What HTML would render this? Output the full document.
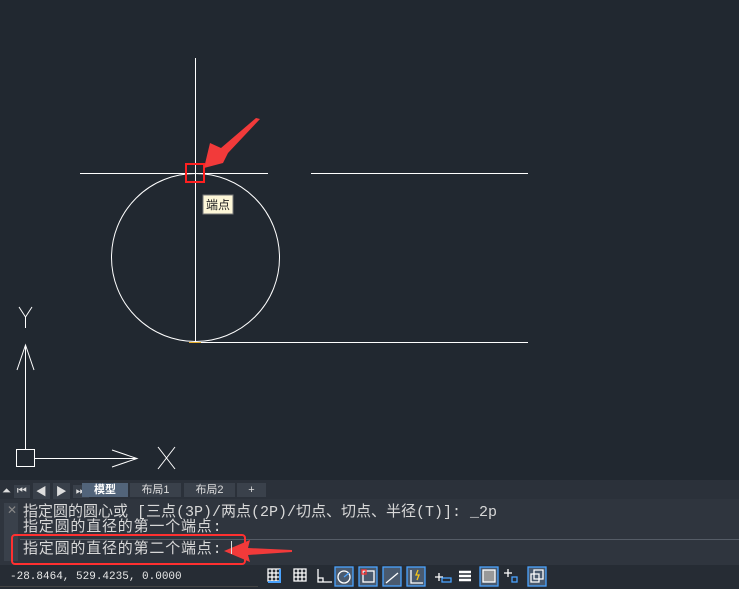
<!DOCTYPE html><html><head><meta charset="utf-8"><style>
body{margin:0;width:739px;height:589px;background:#212830;overflow:hidden;font-family:"Liberation Sans","Noto Sans CJK SC",sans-serif;position:relative}
.abs{position:absolute}
.cmd{font-family:"Liberation Mono","Noto Sans CJK SC",monospace;font-size:15px;color:#d8d8d8;line-height:15px;white-space:nowrap}
</style></head><body>
<svg class="abs" style="left:0;top:0" width="739" height="589">
<g stroke="#fff" stroke-width="1" fill="none">
<line x1="80" y1="173.5" x2="268" y2="173.5"/>
<line x1="311" y1="173.5" x2="528" y2="173.5"/>
<line x1="195.5" y1="58" x2="195.5" y2="342"/>
<line x1="195" y1="342.5" x2="528" y2="342.5"/>
<circle cx="195.5" cy="257.5" r="84"/>
<line x1="25.5" y1="345" x2="25.5" y2="449"/>
<polyline points="17,370 25.5,345 34,370"/>
<rect x="16.5" y="449.5" width="18" height="17"/>
<line x1="35" y1="458.5" x2="137" y2="458.5"/>
<polyline points="112,450 137,458.5 112,467"/>
<polyline points="19,307 25.5,317 32,307"/><line x1="25.5" y1="317" x2="25.5" y2="328"/>
<line x1="158" y1="447" x2="175" y2="469"/><line x1="175" y1="447" x2="158" y2="469"/>
</g>
<line x1="189" y1="342.5" x2="201" y2="342.5" stroke="#e8b030"/>
<rect x="186" y="164" width="18" height="18" fill="none" stroke="#ff2020" stroke-width="2"/>
<polygon points="260,119 228,153 223,163 204,168 210,143 221,148 256,118" fill="#f23a3a"/>
<rect x="203" y="195" width="30" height="19" fill="#fdf7d8" stroke="#777"/>
<text x="206" y="209" font-size="12" fill="#222" font-family="Noto Sans CJK SC">端点</text>
<rect x="0" y="480" width="739" height="19" fill="#2b313a"/>
<rect x="0" y="499" width="739" height="66" fill="#2f353e"/>
<rect x="0" y="565" width="739" height="24" fill="#262c34"/>
<rect x="4" y="503" width="14" height="58" fill="#3a414b"/>
<rect x="20" y="539" width="719" height="1" fill="#555c66"/>
<rect x="12" y="535" width="233" height="29" rx="3" fill="none" stroke="#ff3030" stroke-width="2"/>
<polygon points="224,551 250,540 248,548 292,550 292,552 248,555 250,562" fill="#f23a3a"/>
</svg>
<div class="abs" style="left:2px;top:483px;font-size:11px;color:#ddd;display:flex;gap:3px;align-items:center">
<span>⏶</span><span style="background:#39404a;padding:0 3px">⏮</span><span style="background:#39404a;padding:0 3px">◀</span><span style="background:#39404a;padding:0 3px">▶</span><span style="background:#39404a;padding:0 3px">⏭</span>
</div>
<div class="abs" style="left:82px;top:483px;width:46px;height:14px;background:#52647a;color:#fff;font-size:11px;text-align:center;font-weight:bold;line-height:14px">模型</div>
<div class="abs" style="left:130px;top:483px;width:51px;height:14px;background:#3a414b;color:#ddd;font-size:11px;text-align:center;line-height:14px">布局1</div>
<div class="abs" style="left:184px;top:483px;width:51px;height:14px;background:#3a414b;color:#ddd;font-size:11px;text-align:center;line-height:14px">布局2</div>
<div class="abs" style="left:237px;top:483px;width:29px;height:14px;background:#3a414b;color:#ddd;font-size:11px;text-align:center;line-height:14px">+</div>
<div class="abs" style="left:7px;top:503px;color:#888;font-size:12px">✕</div>
<div class="abs cmd" style="left:23px;top:505px">指定圆的圆心或 [三点(3P)/两点(2P)/切点、切点、半径(T)]: _2p</div>
<div class="abs cmd" style="left:23px;top:520px;letter-spacing:0.8px">指定圆的直径的第一个端点:</div>
<div class="abs cmd" style="left:23px;top:542px;letter-spacing:0.8px">指定圆的直径的第二个端点:</div>
<div class="abs" style="left:231px;top:541px;width:1px;height:13px;background:#ddd"></div>
<div class="abs" style="left:10px;top:571px;font-family:'Liberation Mono',monospace;font-size:11px;color:#e8e8e8">-28.8464, 529.4235, 0.0000</div>
<div class="abs" style="left:0;top:586px;width:258px;height:1px;background:#444"></div>
<svg class="abs" style="left:264px;top:565px" width="290" height="24" fill="none" stroke="#fff" stroke-width="1.3">
<path d="M4 4h12v12H4zM4 8h12M4 12h12M8 4v12M12 4v12"/><path d="M16 4v13H4" stroke="#4aa3ff" stroke-width="2"/>
<path d="M30 4h12v12H30zM30 8h12M30 12h12M34 4v12M38 4v12"/>
<path d="M54 4v13h14M54 13h5v4"/>
<rect x="71" y="2" width="18" height="19" fill="#4a5a6e" stroke="#4aa3ff"/><circle cx="80" cy="12" r="6"/><path d="M80 12l5-4" stroke="#4aa3ff"/>
<rect x="95" y="2" width="18" height="19" fill="#4a5a6e" stroke="#4aa3ff"/><rect x="99" y="6" width="11" height="11"/><rect x="98" y="5" width="4" height="4" stroke="#f33"/>
<rect x="119" y="2" width="18" height="19" fill="#4a5a6e" stroke="#4aa3ff"/><path d="M122 18l12-10"/>
<rect x="143" y="2" width="18" height="19" fill="#4a5a6e" stroke="#4aa3ff"/><path d="M147 5v13h12"/><path d="M154 5l-2 5h3l-2 5" stroke="#f5c518"/>
<path d="M175 8v8M171 12h8"/><rect x="178" y="13" width="9" height="4" stroke="#4aa3ff"/>
<path d="M195 7h12M195 11h12M195 15h12" stroke-width="2.5"/>
<rect x="216" y="2" width="18" height="19" fill="#4a5a6e" stroke="#4aa3ff"/><rect x="219" y="5" width="12" height="12" fill="#999"/>
<path d="M244 4v8M240 8h8"/><rect x="248" y="12" width="5" height="5" stroke="#4aa3ff"/>
<rect x="264" y="2" width="18" height="19" fill="#4a5a6e" stroke="#4aa3ff"/><path d="M270 5h9v9h-9zM267 9h8v8h-8z"/>
</svg>
</body></html>
